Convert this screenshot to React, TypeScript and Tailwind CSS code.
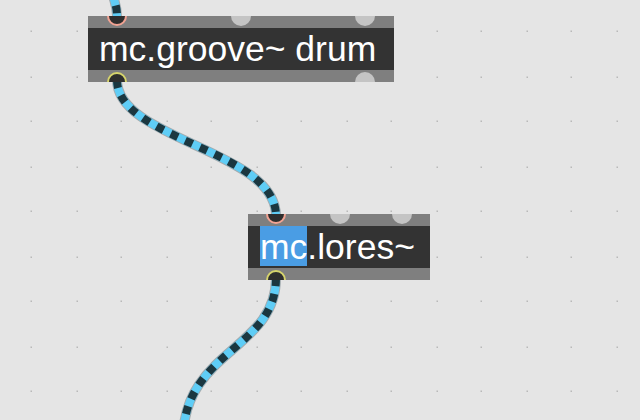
import React from "react";

const coords: number[] = [];
for (let i = 0; i < 8; i++) {
  coords.push(31 + i * 90, 77 + i * 90);
}

function Cable({ d }: { d: string }) {
  return (
    <g fill="none" strokeLinecap="butt">
      <path d={d} stroke="#a3acb0" strokeWidth={10} />
      <path d={d} stroke="#5fcdf6" strokeWidth={8} />
      <path d={d} stroke="#1b3740" strokeWidth={8} strokeDasharray="8 8" />
    </g>
  );
}

function Port({ left, top, kind }: { left: number; top: number; kind: "in" | "out" | "gray" }) {
  if (kind === "gray") {
    return (
      <div
        className="absolute w-[20px] h-[20px] rounded-full bg-[#c4c4c4]"
        style={{ left, top }}
      />
    );
  }
  return (
    <div
      className={
        "absolute w-[20px] h-[20px] rounded-full bg-[#2e2e2e] border-2 " +
        (kind === "in" ? "border-[#f2a393]" : "border-[#d6d46c]")
      }
      style={{ left, top }}
    />
  );
}

export default function App() {
  return (
    <div className="relative w-[640px] h-[420px] bg-[#e5e5e5] overflow-hidden" style={{ fontFamily: '"Liberation Sans", Arial, sans-serif' }}>
      <svg className="absolute inset-0" width={640} height={420}>
        {coords.map((x) =>
          coords.map((y) => (
            <rect key={x + "-" + y} x={x - 0.5} y={y - 0.5} width={1.5} height={1.5} fill="#b9b9b9" />
          ))
        )}
        <Cable d="M 112 -10 C 113 0, 117 4, 117 16" />
        <Cable d="M 117 80 C 117 140, 276 150, 276 216" />
        <Cable d="M 276 278 C 276 350, 183 350, 183 440" />
      </svg>

      {/* mc.groove~ drum */}
      <div className="absolute left-[88px] top-[16px] w-[306px] h-[66px] overflow-hidden flex flex-col">
        <div className="h-[12px] bg-[#7f7f7f]" />
        <div className="h-[42px] bg-[#333333] pl-[11px] pt-[1px] text-white text-[35.5px] leading-[40px] whitespace-nowrap">
          mc.groove~ drum
        </div>
        <div className="h-[12px] bg-[#7f7f7f]" />
        <Port left={19} top={-10} kind="in" />
        <Port left={143} top={-10} kind="gray" />
        <Port left={267} top={-10} kind="gray" />
        <Port left={19} top={56} kind="out" />
        <Port left={267} top={56} kind="gray" />
      </div>

      {/* mc.lores~ */}
      <div className="absolute left-[248px] top-[214px] w-[182px] h-[66px] overflow-hidden flex flex-col">
        <div className="h-[12px] bg-[#7f7f7f]" />
        <div className="h-[42px] bg-[#333333] pl-[12px] text-white text-[35.5px] leading-[40px] whitespace-nowrap flex items-start">
          <span className="bg-[#4a9de4] h-[40px] pt-[1px]">mc</span>
          <span className="pt-[1px]">.lores~</span>
        </div>
        <div className="h-[12px] bg-[#7f7f7f]" />
        <Port left={18} top={-10} kind="in" />
        <Port left={82} top={-10} kind="gray" />
        <Port left={144} top={-10} kind="gray" />
        <Port left={18} top={56} kind="out" />
      </div>
    </div>
  );
}
